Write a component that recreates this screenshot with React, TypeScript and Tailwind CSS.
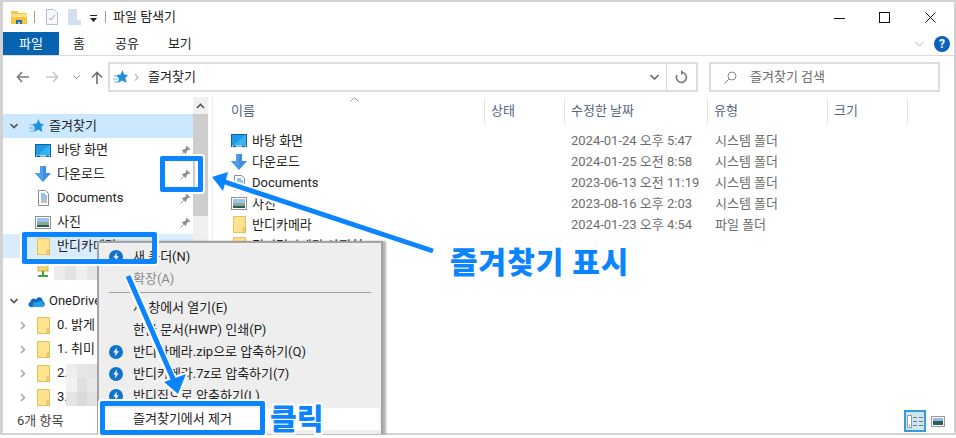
import { ReactNode } from "react";

const BLUE = "#0a84ff";

function DesktopIcon() {
  return (
    <svg width="16" height="13" viewBox="0 0 16 13">
      <rect x="0.5" y="0.5" width="15" height="12" fill="#1e9be8" stroke="#0d5f9e" />
      <path d="M1 12 L15 1 V12 Z" fill="#39b1f2" />
      <path d="M1 12 H2 M5 12 H11 M14 12 H15" stroke="#fff" />
    </svg>
  );
}

function DownloadIcon() {
  return (
    <svg width="16" height="16" viewBox="0 0 16 16">
      <path d="M5 0 H11 V7 H16 L8 16 L0 7 H5 Z" fill="#3d8ede" />
      <path d="M5 0 H8 V16 L0 7 H5 Z" fill="#4f9fe8" />
    </svg>
  );
}

function DocIcon() {
  return (
    <svg width="13" height="16" viewBox="0 0 13 16">
      <path d="M1.5 0.5 H8.5 L11.5 3.5 V15.5 H1.5 Z" fill="#fff" stroke="#8c8c8c" />
      <path d="M4 4 H8 M4 6 H10 M4 8 H10" stroke="#2b83d6" />
      <path d="M4 10 H10 M4 12 H10" stroke="#808080" />
    </svg>
  );
}

function PictureIcon() {
  return (
    <svg width="16" height="13" viewBox="0 0 16 13">
      <rect x="0.5" y="0.5" width="15" height="12" fill="#fff" stroke="#8f8f8f" />
      <rect x="2" y="2" width="12" height="4" fill="#9cc2ea" />
      <rect x="2" y="6" width="12" height="3" fill="#8aa89a" />
      <rect x="2" y="9" width="12" height="2" fill="#2f5b4a" />
    </svg>
  );
}

function FolderIcon() {
  return (
    <svg width="13" height="17" viewBox="0 0 13 17">
      <path d="M0.5 0.5 H12.5 V16.5 H0.5 Z" fill="#ffe38f" stroke="#e2c060" />
      <path d="M10 12 H12.5 V16.5 H10 Z" fill="#f3cf66" stroke="#d8b24c" strokeWidth="0.6" />
    </svg>
  );
}

function StarIcon() {
  return (
    <svg width="15" height="14" viewBox="0 0 15 14">
      <path d="M9.5 0 L11.2 4.4 L15 5 L12.4 8 L13.4 13 L9.2 10.6 L5 13 L6 8.4 L3 5 L7.6 4.4 Z" fill="#1f8fe0" />
      <path d="M1 6 H5 M0 9 H5 M1 12 H5" stroke="#6db6ee" />
    </svg>
  );
}

function CloudIcon() {
  return (
    <svg width="17" height="11" viewBox="0 0 17 11">
      <path d="M3 11 C0 11 -0.5 7 2.2 6.2 C2.5 3 6 1.5 8 3.4 C10 0 15 1 14.6 5.2 C17.5 5.6 17.6 11 14 11 Z" fill="#0f6cbd" />
      <path d="M5 11 C3.6 8 6.5 5.6 9.2 6.6 C11 4.6 15 5 15 7.4 C17 8 16.6 11 14 11 Z" fill="#2a9fe8" />
    </svg>
  );
}

function PinIcon() {
  return (
    <svg width="11" height="11" viewBox="0 0 11 11">
      <path d="M6.5 0.5 L10.5 4.5 L9.4 5 L8.6 4.6 L6.4 6.8 L6.4 8.6 L5.6 9 L2 5.4 L2.6 4.6 L4.4 4.6 L6.4 2.4 L6 1.5 Z" fill="#8b8b8b" />
      <path d="M3.6 7.4 L0.5 10.5" stroke="#8b8b8b" />
    </svg>
  );
}

function BandiIcon() {
  return (
    <svg width="14" height="14" viewBox="0 0 14 14">
      <circle cx="7" cy="7" r="7" fill="#1073c9" />
      <path d="M8 2.5 L4.2 7.6 H6.6 L5.8 11.5 L9.8 6.2 H7.4 Z" fill="#fff" />
    </svg>
  );
}

function OpenChevron() {
  return (
    <svg width="8" height="6" viewBox="0 0 8 6">
      <path d="M0.5 1 L4 4.5 L7.5 1" fill="none" stroke="#555" strokeWidth="1.6" />
    </svg>
  );
}

function ClosedChevron() {
  return (
    <svg width="6" height="9" viewBox="0 0 6 9">
      <path d="M1 1 L4.5 4.5 L1 8" fill="none" stroke="#a6a6a6" strokeWidth="1.5" />
    </svg>
  );
}

function Mosaic({ cols, cells }: { cols: string; cells: string[] }) {
  return (
    <div className={cols}>
      {cells.map((c, i) => (
        <div key={i} style={{ background: c }} />
      ))}
    </div>
  );
}

function RootRow({ icon, label, sel }: { icon: ReactNode; label: string; sel?: boolean }) {
  return (
    <div className={`flex h-6 items-center pl-[7px] ${sel ? "bg-[#cce8ff]" : ""}`}>
      <OpenChevron />
      <div className="ml-[10px] flex w-[17px] shrink-0 justify-center">{icon}</div>
      <span className="ml-[4px] whitespace-nowrap">{label}</span>
    </div>
  );
}

function NavRow({
  icon,
  label,
  pin,
  sel,
  arrow,
}: {
  icon: ReactNode;
  label?: string;
  pin?: boolean;
  sel?: boolean;
  arrow?: boolean;
}) {
  return (
    <div className={`flex h-6 items-center ${sel ? "bg-[#d9ecfc]" : ""}`}>
      <div className="flex w-[23px] shrink-0 justify-end">{arrow && <ClosedChevron />}</div>
      <div className="ml-[9px] flex w-[16px] shrink-0 justify-center">{icon}</div>
      <span className="ml-[6px] whitespace-nowrap">{label}</span>
      {pin && (
        <div className="ml-auto mr-[2px]">
          <PinIcon />
        </div>
      )}
    </div>
  );
}

const files = [
  { icon: <DesktopIcon />, name: "바탕 화면", date: "2024-01-24 오후 5:47", type: "시스템 폴더" },
  { icon: <DownloadIcon />, name: "다운로드", date: "2024-01-25 오전 8:58", type: "시스템 폴더" },
  { icon: <DocIcon />, name: "Documents", date: "2023-06-13 오전 11:19", type: "시스템 폴더" },
  { icon: <PictureIcon />, name: "사진", date: "2023-08-16 오후 2:03", type: "시스템 폴더" },
  { icon: <FolderIcon />, name: "반디카메라", date: "2024-01-23 오후 4:54", type: "파일 폴더" },
  { icon: <FolderIcon />, name: "디지털카메라 사진첩", date: "", type: "" },
];

const cols = ["w-[264px]", "w-[80px]", "w-[143px]", "w-[120px]", "w-[80px]"];
const heads = ["이름", "상태", "수정한 날짜", "유형", "크기"];

function MenuItem({ label, icon, muted, white }: { label: string; icon?: boolean; muted?: boolean; white?: boolean }) {
  return (
    <div className={`flex h-[22px] items-center ${white ? "mr-[1px] h-[21px] bg-white" : ""} ${muted ? "text-[#8a8a8a]" : "text-[#222]"}`}>
      <div className="flex w-[34px] shrink-0 justify-center">{icon && <BandiIcon />}</div>
      <span className="whitespace-nowrap">{label}</span>
    </div>
  );
}

export default function App() {
  return (
    <div className="relative h-[438px] w-[956px] overflow-hidden bg-white font-['Roboto','Noto_Sans_CJK_KR',sans-serif] text-[13px] text-[#222]">
      <div className="flex h-[435px] flex-col border-y-2 border-r-2 border-l-[3px] border-[#d2d2d2]">
        {/* title bar */}
        <div className="flex h-[30px] shrink-0 items-center">
          <svg className="ml-[8px]" width="16" height="15" viewBox="0 0 16 15">
            <path d="M0 1 H6 L8 3 H16 V14 H0 Z" fill="#f6c544" />
            <rect x="0" y="4" width="16" height="3" fill="#ffe08a" />
            <path d="M5 14 V10 H11 V14 H9 V12 H7 V14 Z" fill="#1a73c4" />
          </svg>
          <div className="ml-[7px] h-[12px] w-px bg-[#9a9a9a]" />
          <svg className="ml-[11px]" width="12" height="16" viewBox="0 0 12 16">
            <path d="M0.5 0.5 H8 L11.5 4 V15.5 H0.5 Z" fill="#f7f9fc" stroke="#b4c2d8" />
            <path d="M3 9 L5 11 L9 6" fill="none" stroke="#a0a0a0" />
          </svg>
          <svg className="ml-[10px]" width="13" height="16" viewBox="0 0 13 16">
            <path d="M0 0 H9 V11 H13 V16 H0 Z" fill="#d3dfef" />
          </svg>
          <svg className="ml-[9px] mt-[2px]" width="7" height="7" viewBox="0 0 7 7">
            <path d="M0 0 H7 V1 H0 Z M0 3 H7 L3.5 7 Z" fill="#222" />
          </svg>
          <div className="ml-[8px] h-[12px] w-px bg-[#9a9a9a]" />
          <span className="ml-[7px]">파일 탐색기</span>
          <div className="ml-auto flex items-center">
            <svg width="11" height="11" viewBox="0 0 11 11">
              <path d="M0 6.5 H11" stroke="#111" />
            </svg>
            <svg className="ml-[34px]" width="11" height="11" viewBox="0 0 11 11">
              <rect x="0.5" y="0.5" width="10" height="10" fill="none" stroke="#111" />
            </svg>
            <svg className="ml-[35px] mr-[18px]" width="11" height="11" viewBox="0 0 11 11">
              <path d="M0.5 0.5 L10.5 10.5 M10.5 0.5 L0.5 10.5" stroke="#111" />
            </svg>
          </div>
        </div>

        {/* ribbon tabs */}
        <div className="flex h-[24px] shrink-0 items-center border-b border-[#dadada]">
          <div className="flex h-[23px] w-[56px] items-center justify-center bg-[#0563b0] text-white">파일</div>
          <span className="ml-[14px]">홈</span>
          <span className="ml-[30px]">공유</span>
          <span className="ml-[29px]">보기</span>
          <svg className="ml-auto" width="9" height="6" viewBox="0 0 9 6">
            <path d="M0.5 1 L4.5 5 L8.5 1" fill="none" stroke="#b5b5b5" />
          </svg>
          <div className="ml-[10px] mr-[4px] flex h-4 w-4 items-center justify-center rounded-full bg-[#0a63b8] text-[12px] font-bold text-white">?</div>
        </div>

        {/* address row */}
        <div className="flex h-[41px] shrink-0 items-center pt-[1px]">
          <svg className="ml-[13px]" width="13" height="12" viewBox="0 0 13 12">
            <path d="M6 1 L1.5 6 L6 11 M1.5 6 H13" fill="none" stroke="#7a7a7a" strokeWidth="1.6" />
          </svg>
          <svg className="ml-[17px]" width="13" height="12" viewBox="0 0 13 12">
            <path d="M7 1 L11.5 6 L7 11 M11.5 6 H0" fill="none" stroke="#c9c9c9" strokeWidth="1.6" />
          </svg>
          <svg className="ml-[14px]" width="7" height="5" viewBox="0 0 7 5">
            <path d="M0.5 0.5 L3.5 3.5 L6.5 0.5" fill="none" stroke="#8f8f8f" />
          </svg>
          <svg className="ml-[11px]" width="12" height="13" viewBox="0 0 12 13">
            <path d="M1 6.5 L6 1.5 L11 6.5 M6 1.5 V13" fill="none" stroke="#6f6f6f" strokeWidth="1.6" />
          </svg>
          <div className="ml-[5px] flex h-[30px] w-[590px] items-center border-2 border-[#dcdcdc]">
            <div className="ml-[3px]">
              <StarIcon />
            </div>
            <svg className="ml-[6px]" width="5" height="7" viewBox="0 0 5 7">
              <path d="M1 0.5 L4 3.5 L1 6.5" fill="none" stroke="#808080" />
            </svg>
            <span className="ml-[9px]">즐겨찾기</span>
            <svg className="ml-auto" width="9" height="6" viewBox="0 0 9 6">
              <path d="M0.5 1 L4.5 5 L8.5 1" fill="none" stroke="#6b6b6b" strokeWidth="1.6" />
            </svg>
            <div className="ml-[7px] h-full w-px bg-[#dcdcdc]" />
            <svg className="mx-[7px]" width="15" height="15" viewBox="0 0 15 15">
              <path d="M3 5 A5 5 0 1 0 8 2.5" fill="none" stroke="#7a7a7a" strokeWidth="1.6" />
              <path d="M7 0 L10 2.5 L7 5 Z" fill="#7a7a7a" />
            </svg>
          </div>
          <div className="ml-[11px] flex h-[30px] w-[231px] items-center border-2 border-[#dcdcdc] text-[#6d6d6d]">
            <svg className="ml-[13px]" width="13" height="13" viewBox="0 0 13 13">
              <circle cx="8" cy="5" r="4" fill="none" stroke="#8a8a8a" />
              <path d="M5 8 L0.5 12.5" stroke="#8a8a8a" />
            </svg>
            <span className="ml-[13px]">즐겨찾기 검색</span>
          </div>
        </div>

        {/* content */}
        <div className="flex min-h-0 flex-1">
          {/* nav pane */}
          <div className="flex w-[208px] shrink-0 overflow-hidden">
            <div className="w-[190px] shrink-0 pt-[17px]">
              <RootRow sel icon={<StarIcon />} label="즐겨찾기" />
              <NavRow icon={<DesktopIcon />} label="바탕 화면" pin />
              <NavRow icon={<DownloadIcon />} label="다운로드" pin />
              <NavRow icon={<DocIcon />} label="Documents" pin />
              <NavRow icon={<PictureIcon />} label="사진" pin />
              <NavRow sel icon={<FolderIcon />} label="반디카메라" />
              <NavRow
                icon={
                  <svg width="12" height="14" viewBox="0 0 12 14">
                    <rect x="1" y="0" width="10" height="8" fill="#f2d675" stroke="#d3ae3c" />
                    <path d="M6 8 V12 M1 13 H11" stroke="#3fa33f" strokeWidth="2" />
                  </svg>
                }
              />
              <div className="h-[7px]" />
              <RootRow icon={<CloudIcon />} label="OneDrive" />
              <NavRow arrow icon={<FolderIcon />} label="0. 밝게" />
              <NavRow arrow icon={<FolderIcon />} label="1. 취미" />
              <NavRow arrow icon={<FolderIcon />} label="2." />
              <NavRow arrow icon={<FolderIcon />} label="3." />
            </div>
            <div className="flex w-[15px] shrink-0 flex-col bg-[#f0f0f0]">
              <div className="flex h-[17px] items-center justify-center">
                <svg width="9" height="6" viewBox="0 0 9 6">
                  <path d="M1 5 L4.5 1.5 L8 5" fill="none" stroke="#555" strokeWidth="1.6" />
                </svg>
              </div>
              <div className="h-[102px] bg-[#cdcdcd]" />
            </div>
          </div>

          {/* file list */}
          <div className="ml-[1px] min-w-0 flex-1 border-l border-[#ececec] pl-[8px]">
            <div className="relative flex h-[27px] pt-[1px] text-[#54667e]">
              <svg className="absolute left-[129px] top-[0px]" width="9" height="5" viewBox="0 0 9 5">
                <path d="M0.5 4.5 L4.5 0.5 L8.5 4.5" fill="none" stroke="#9a9a9a" />
              </svg>
              {heads.map((h, i) => (
                <div key={h} className={`${cols[i]} flex h-[26px] shrink-0 items-center border-r border-[#e5e5e5]`}>
                  <span className={i === 0 ? "pl-[10px]" : "pl-[6px]"}>{h}</span>
                </div>
              ))}
            </div>
            <div className="pt-[6px]">
              {files.map((f, i) => (
                <div key={i} className="flex h-[21px] items-center">
                  <div className="flex w-[264px] shrink-0 items-center pl-[10px]">
                    <div className="flex w-[16px] justify-center">{f.icon}</div>
                    <span className="ml-[5px] whitespace-nowrap">{f.name}</span>
                  </div>
                  <div className="w-[80px] shrink-0" />
                  <div className="w-[143px] shrink-0 pl-[6px] text-[#6d6d6d]">{f.date}</div>
                  <div className="pl-[7px] text-[#6d6d6d]">{f.type}</div>
                </div>
              ))}
            </div>
          </div>
        </div>

        {/* status bar */}
        <div className="flex h-[24px] shrink-0 items-center">
          <span className="ml-[14px] text-[#444]">6개 항목</span>
          <div className="ml-auto flex h-[22px] w-[22px] items-center justify-center border-2 border-[#3a9ad6] bg-[#cce8f7]">
            <svg width="16" height="13" viewBox="0 0 16 13">
              <rect x="0.5" y="0.5" width="4" height="12" fill="#fff" stroke="#999" />
              <path d="M6 2.5 H10 M12 2.5 H16 M6 6.5 H10 M12 6.5 H16 M6 10.5 H10 M12 10.5 H16" stroke="#777" />
              <path d="M2 10 H3 V11 H2 Z" fill="#d33" />
            </svg>
          </div>
          <div className="ml-[5px] mr-[9px]">
            <svg width="14" height="11" viewBox="0 0 14 11">
              <rect x="0.5" y="0.5" width="13" height="10" fill="#fff" stroke="#9a9a9a" />
              <rect x="2" y="2" width="10" height="3" fill="#8fb8e8" />
              <rect x="2" y="5" width="10" height="4" fill="#2f5b5a" />
            </svg>
          </div>
        </div>
      </div>

      {/* mosaic over blurred names */}
      <Mosaic
        cols="absolute left-[54px] top-[264px] grid h-[16px] w-[44px] grid-cols-4"
        cells={["#ececec", "#e2e2e2", "#efefef", "#e6e6e6"]}
      />
      <Mosaic
        cols="absolute left-[66px] top-[364px] grid h-[42px] w-[32px] grid-cols-3 grid-rows-3"
        cells={["#eeeeee", "#e6e6e6", "#e3e3e3", "#f2f2f2", "#e0e0e0", "#e8e8e8", "#e4e4e4", "#dadada", "#e2e2e2"]}
      />

      {/* context menu */}
      <div className="absolute left-[97px] top-[241px] h-[193px] w-[286px] border-2 border-[#a3a3a3] border-b-0 bg-[#eeeeee] shadow-[3px_0_2px_rgba(0,0,0,0.3)]">
        <div className="pt-[3px]">
          <MenuItem icon label="새 폴더(N)" />
          <MenuItem muted label="확장(A)" />
          <div className="mx-[10px] my-[2px] h-px bg-[#a0a0a0]" />
          <div className="h-[2px]" />
          <MenuItem label="새 창에서 열기(E)" />
          <MenuItem label="한글 문서(HWP) 인쇄(P)" />
          <MenuItem icon label="반디카메라.zip으로 압축하기(Q)" />
          <MenuItem icon label="반디카메라.7z로 압축하기(7)" />
          <MenuItem icon label="반디집으로 압축하기(L)" />
          <div className="h-[1px]" />
          <MenuItem white label="즐겨찾기에서 제거" />
        </div>
      </div>

      {/* annotation boxes */}
      <div className="absolute left-[160px] top-[156px] h-[36px] w-[43px] rounded-[2px] border-[5px] border-[#0a84ff] shadow-[0_0_0_2px_white]">
        <div className="ml-[30px] h-full w-[3px] bg-white" />
      </div>
      <div className="absolute left-[22px] top-[232px] h-[32px] w-[135px] rounded-[2px] border-[5px] border-[#0a84ff] shadow-[0_0_0_2px_white]" />
      <div className="absolute left-[100px] top-[401px] h-[34px] w-[165px] rounded-[2px] border-[5px] border-[#0a84ff] shadow-[0_0_0_2px_white]" />

      {/* annotation arrows */}
      <svg className="pointer-events-none absolute left-0 top-0" width="956" height="438" viewBox="0 0 956 438">
        <g fill="none" stroke="#fff" strokeWidth="9">
          <path d="M433 251 L224 182" />
          <path d="M128 276 L172 378" />
        </g>
        <path d="M212 177 L228 172 L223 191 Z" fill="#fff" stroke="#fff" strokeWidth="4" />
        <path d="M178 394 L164 382 L186 374 Z" fill="#fff" stroke="#fff" strokeWidth="4" />
        <g fill="none" stroke={BLUE} strokeWidth="5">
          <path d="M433 251 L222 181" />
          <path d="M128 276 L174 381" />
        </g>
        <path d="M212 177 L228 172 L223 191 Z" fill={BLUE} />
        <path d="M178 394 L164 382 L186 374 Z" fill={BLUE} />
      </svg>

      <div className="absolute left-[450px] top-[240px] whitespace-nowrap font-['Noto_Sans_CJK_KR',sans-serif] text-[30px] font-black leading-[40px] tracking-[1px] text-[#0a84ff]">
        즐겨찾기 표시
      </div>
      <div className="absolute left-[270px] top-[397px] whitespace-nowrap font-['Noto_Sans_CJK_KR',sans-serif] text-[29px] font-black leading-[40px] text-[#0a84ff] [-webkit-text-stroke:4px_white] [paint-order:stroke_fill]">
        클릭
      </div>
    </div>
  );
}
